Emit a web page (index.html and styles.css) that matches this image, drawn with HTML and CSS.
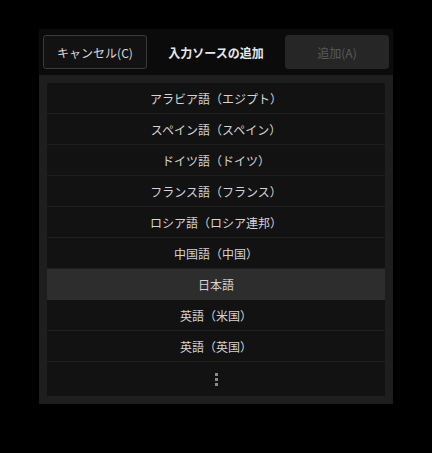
FILE: index.html
```html
<!DOCTYPE html>
<html lang="ja">
<head>
<meta charset="utf-8">
<link rel="stylesheet" href="styles.css">
</head>
<body>
<div class="panel">
  <div class="header">
    <button class="btn cancel">キャンセル(C)</button>
    <div class="title">入力ソースの追加</div>
    <button class="btn add">追加(A)</button>
  </div>
  <div class="body">
    <ul class="list">
      <li class="row">アラビア語（エジプト）</li>
      <li class="row">スペイン語（スペイン）</li>
      <li class="row">ドイツ語（ドイツ）</li>
      <li class="row">フランス語（フランス）</li>
      <li class="row">ロシア語（ロシア連邦）</li>
      <li class="row">中国語（中国）</li>
      <li class="row selected">日本語</li>
      <li class="row">英語（米国）</li>
      <li class="row">英語（英国）</li>
      <li class="row more"><span class="dots"><i></i><i></i><i></i></span></li>
    </ul>
  </div>
</div>
</body>
</html>
```
FILE: styles.css
```css
html, body {
  margin: 0;
  padding: 0;
  background: #000;
  font-family: "Noto Sans CJK JP", "Noto Sans", sans-serif;
}
body {
  padding: 29px 0 0 39px;
}
.panel {
  width: 354px;
}
.header {
  background: #0b0b0b;
  height: 46px;
  box-sizing: border-box;
  padding: 6px 4px;
  display: flex;
  align-items: center;
  justify-content: space-between;
}
.btn {
  width: 104px;
  height: 34px;
  box-sizing: border-box;
  border-radius: 3px;
  font-family: "Noto Sans CJK JP", sans-serif;
  font-size: 12px;
  padding: 0;
}
.cancel {
  background: #121212;
  border: 1px solid #3a3a3a;
  color: #d8d8d8;
}
.add {
  background: #262626;
  border: 1px solid #262626;
  color: #5a5a5a;
}
.title {
  color: #e8e8e8;
  font-size: 12px;
  font-weight: bold;
}
.body {
  background: #1e1e1e;
  padding: 8px;
}
.list {
  list-style: none;
  margin: 0;
  padding: 0;
  background: #121212;
}
.row {
  height: 30px;
  border-bottom: 1px solid #1e1e1e;
  display: flex;
  align-items: center;
  justify-content: center;
  color: #d4d4d4;
  font-size: 12px;
}
.row.selected {
  background: #2d2d2d;
  border-bottom-color: #2d2d2d;
}
.row.more {
  height: 34px;
  border-bottom: 0;
}
.dots {
  display: flex;
  flex-direction: column;
  gap: 2px;
  margin-top: 1px;
}
.dots i {
  display: block;
  width: 3px;
  height: 3px;
  background: #8a8a8a;
}
```
